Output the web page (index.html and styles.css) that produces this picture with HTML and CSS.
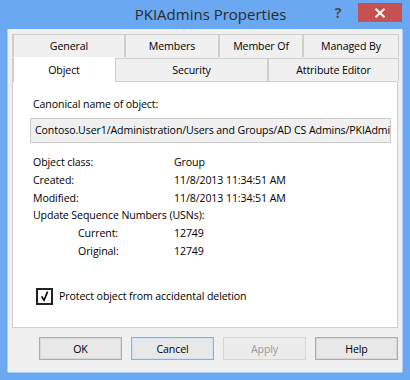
FILE: index.html
```html
<!DOCTYPE html>
<html>
<head>
<meta charset="utf-8">
<link rel="stylesheet" href="styles.css">
</head>
<body>
<div class="window">
  <div class="titlebar">
    <div class="title">PKIAdmins Properties</div>
    <div class="help">?</div>
    <div class="close"><svg width="12" height="10" viewBox="0 0 12 10"><path d="M1.5 0.8 L10.5 9.2 M10.5 0.8 L1.5 9.2" stroke="#fff" stroke-width="2"/></svg></div>
  </div>
  <div class="client">
    <div class="tabs">
      <div class="row row1">
        <div class="tab">General</div>
        <div class="tab">Members</div>
        <div class="tab">Member Of</div>
        <div class="tab">Managed By</div>
      </div>
      <div class="row row2">
        <div class="tab active">Object</div>
        <div class="tab">Security</div>
        <div class="tab">Attribute Editor</div>
      </div>
    </div>
    <div class="panel">
      <div class="caption">Canonical name of object:</div>
      <div class="field">Contoso.User1/Administration/Users and Groups/AD CS Admins/PKIAdmins</div>
      <div class="props">
        <div class="k">Object class:</div><div class="v">Group</div>
        <div class="k">Created:</div><div class="v">11/8/2013 11:34:51 AM</div>
        <div class="k">Modified:</div><div class="v">11/8/2013 11:34:51 AM</div>
        <div class="k wide">Update Sequence Numbers (USNs):</div>
        <div class="k sub">Current:</div><div class="v">12749</div>
        <div class="k sub">Original:</div><div class="v">12749</div>
      </div>
      <div class="check">
        <div class="box"><svg width="12" height="12" viewBox="0 0 12 12"><path d="M2.6 6.4 L5 10.2 L8.6 1.6" fill="none" stroke="#000" stroke-width="1.6"/></svg></div>
        <span>Protect object from accidental deletion</span>
      </div>
    </div>
    <div class="buttons">
      <div class="btn">OK</div>
      <div class="btn focus">Cancel</div>
      <div class="btn disabled">Apply</div>
      <div class="btn">Help</div>
    </div>
  </div>
</div>
</body>
</html>
```

FILE: styles.css
```css
html, body {
  margin: 0;
  padding: 0;
  background: #6aa8f1;
}
body {
  font-family: "Open Sans", "Noto Sans", sans-serif;
  font-size: 10.6px;
  letter-spacing: -0.1px;
  color: #000;
}
.window {
  width: 410px;
  height: 380px;
  background: #6aa8f1;
  display: flex;
  flex-direction: column;
  box-sizing: border-box;
  padding: 0 8px 8px 8px;
}
.titlebar {
  height: 29px;
  display: flex;
  align-items: flex-start;
  flex: none;
}
.title {
  flex: 1;
  padding-left: 90px;
  text-align: center;
  font-size: 15px;
  letter-spacing: 0;
  color: #2b2b2b;
  line-height: 28px;
}
.help {
  width: 30px;
  text-align: center;
  font-weight: bold;
  font-size: 14px;
  color: #4a4a4a;
  line-height: 26px;
  margin-right: 5px;
}
.close {
  width: 44px;
  height: 19px;
  margin-top: 3px;
  background: #c75050;
  display: flex;
  align-items: center;
  justify-content: center;
}
.close svg { display: block; }
.client {
  flex: 1;
  background: #f0f0f0;
  box-shadow: -1px 0 0 #a9cff8, 1px 0 0 #a9cff8, 0 1px 0 #a9cff8;
  padding: 5px 4px 11px 4px;
  display: flex;
  flex-direction: column;
}
.tabs {
  display: flex;
  flex-direction: column;
}
.row {
  display: grid;
  height: 24px;
}
.row1 {
  grid-template-columns: 112px 94px 84px 96px;
  height: 23px;
}
.row2 {
  grid-template-columns: 102px 153px 131px;
}
.tab {
  border: 1px solid #cfcfcf;
  border-left-width: 2px;
  border-bottom: none;
  background: #f0f0f0;
  display: flex;
  align-items: center;
  justify-content: center;
  margin-right: -1px;
}
.row2 .tab {
  margin-top: 1px;
}
.row2 .tab.active {
  margin-top: 0;
  background: #fff;
  border-color: #fff;
  border-left-color: #cfcfcf;
  position: relative;
  z-index: 1;
  margin-bottom: -1px;
}
.panel {
  background: #fff;
  border: 1px solid #cfcfcf;
  height: 247px;
  box-sizing: border-box;
  padding: 15px 6px 0 17px;
}
.caption {
  padding-left: 3px;
  line-height: 15px;
}
.field {
  margin-top: 6px;
  height: 25px;
  box-sizing: border-box;
  border: 1px solid #cccccc;
  background: #f0f0f0;
  padding-left: 4px;
  line-height: 23px;
  white-space: nowrap;
  overflow: hidden;
}
.props {
  margin-top: 11px;
  padding-left: 3px;
  display: grid;
  grid-template-columns: 141px 1fr;
  line-height: 17.8px;
}
.props .wide { grid-column: 1 / 3; }
.props .sub { padding-left: 45px; }
.check {
  margin-top: 27px;
  padding-left: 6px;
  display: flex;
  align-items: center;
  gap: 6px;
}
.box {
  width: 17px;
  height: 17px;
  box-sizing: border-box;
  border: 2px solid #222;
  display: flex;
  align-items: center;
  justify-content: center;
  background: #fff;
}
.box svg { display: block; }
.buttons {
  margin-top: 9px;
  display: flex;
  justify-content: flex-end;
  gap: 9px;
}
.btn {
  width: 83px;
  height: 23px;
  box-sizing: border-box;
  border: 1px solid #adadad;
  box-shadow: inset 0 0 0 1px #d8d8d8;
  background: #e8e8e8;
  display: flex;
  align-items: center;
  justify-content: center;
}
.btn.focus {
  border-color: #7eb4ea;
  box-shadow: inset 0 0 0 1px #cfe2f7;
}
.btn.disabled {
  border-color: #d5d5d5;
  box-shadow: none;
  background: #ececec;
  color: #9a9a9a;
}
```
